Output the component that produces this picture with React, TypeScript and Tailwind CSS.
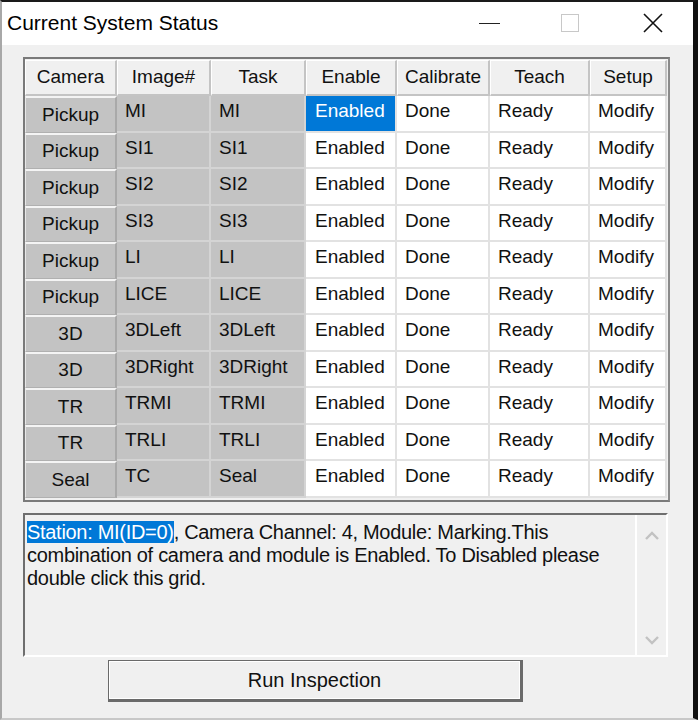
import React from "react";

const rows: [string, string, string][] = [
  ["Pickup", "MI", "MI"],
  ["Pickup", "SI1", "SI1"],
  ["Pickup", "SI2", "SI2"],
  ["Pickup", "SI3", "SI3"],
  ["Pickup", "LI", "LI"],
  ["Pickup", "LICE", "LICE"],
  ["3D", "3DLeft", "3DLeft"],
  ["3D", "3DRight", "3DRight"],
  ["TR", "TRMI", "TRMI"],
  ["TR", "TRLI", "TRLI"],
  ["Seal", "TC", "Seal"],
];

const headers = ["Camera", "Image#", "Task", "Enable", "Calibrate", "Teach", "Setup"];
const widths = ["w-[92px]", "w-[94px]", "w-[95px]", "w-[91px]", "w-[93px]", "w-[100px]", "w-[77px]"];

export default function App() {
  return (
    <div
      className="w-[698px] h-[720px] bg-[#f0f0f0] flex flex-col border-t-2 border-t-[#1a1a1a] border-l-2 border-l-[#a8a8a8] border-r-[5px] border-r-[#111] border-b-2 border-b-[#c8c8c8] overflow-hidden text-[#111]"
      style={{ fontFamily: '"Liberation Sans", Arial, sans-serif' }}
    >
      {/* Title bar */}
      <div className="h-[43px] bg-white flex items-center shrink-0">
        <div className="pl-[5px] pb-[1px] text-[21px] text-black flex-1">Current System Status</div>
        <div className="w-[80px] flex justify-center">
          <div className="w-[21px] h-[1.5px] bg-[#222]" />
        </div>
        <div className="w-[84px] flex justify-center pr-[3px] pb-[2px]">
          <div className="w-[18px] h-[18px] border border-[#c8c8c8]" />
        </div>
        <div className="w-[80px] flex justify-center pb-[2px]">
          <svg width="20" height="20" viewBox="0 0 20 20">
            <path d="M1 1 L19 19 M19 1 L1 19" stroke="#111" strokeWidth="1.6" />
          </svg>
        </div>
      </div>

      {/* Body */}
      <div className="flex flex-col pl-[21px] pt-[12px]">
        {/* Grid */}
        <div className="w-[647px] border-2 border-t-[#7a7a7a] border-l-[#7a7a7a] border-b-[#7a7a7a] border-r-[#8a8a8a] bg-[#f0f0f0] pr-[1px] pb-[2px]">
          <div className="flex h-[37px] pt-[1px]">
            {headers.map((h, i) => (
              <div
                key={h}
                className={`${widths[i]} h-full flex items-center justify-center text-[19px] bg-[#f0f0f0] border-t border-l border-t-white border-l-white border-r-2 border-b-2 border-r-[#c4c4c4] border-b-[#c4c4c4]`}
              >
                {h}
              </div>
            ))}
          </div>
          {rows.map((r, ri) => (
            <div key={ri} className="flex h-[36.5px]">
              <div className="w-[92px] h-full flex items-center justify-center text-[19px] bg-[#c3c3c3] border-t-2 border-l border-t-[#f4f4f4] border-l-[#e8e8e8] border-r-2 border-b border-r-[#a9a9a9] border-b-[#b0b0b0]">
                {r[0]}
              </div>
              <div className="w-[94px] h-full flex items-center pl-[8px] pb-[4px] text-[19px] bg-[#c3c3c3] border-r-2 border-b-2 border-r-[#d4d4d4] border-b-[#d4d4d4]">
                {r[1]}
              </div>
              <div className="w-[95px] h-full flex items-center pl-[8px] pb-[4px] text-[19px] bg-[#c3c3c3] border-r-2 border-b-2 border-r-[#d4d4d4] border-b-[#d4d4d4]">
                {r[2]}
              </div>
              <div
                className={`w-[91px] h-full flex items-center pl-[9px] pb-[4px] text-[19px] border-r-2 border-b-2 border-r-[#e2e2e2] border-b-[#e2e2e2] ${
                  ri === 0 ? "bg-[#0078d7] text-white" : "bg-white"
                }`}
              >
                Enabled
              </div>
              <div className="w-[93px] h-full flex items-center pl-[8px] pb-[4px] text-[19px] bg-white border-r-2 border-b-2 border-r-[#e2e2e2] border-b-[#e2e2e2]">
                Done
              </div>
              <div className="w-[100px] h-full flex items-center pl-[8px] pb-[4px] text-[19px] bg-white border-r-2 border-b-2 border-r-[#e2e2e2] border-b-[#e2e2e2]">
                Ready
              </div>
              <div className="w-[77px] h-full flex items-center pl-[8px] pb-[4px] text-[19px] bg-white border-r-2 border-b-2 border-r-[#e2e2e2] border-b-[#e2e2e2]">
                Modify
              </div>
            </div>
          ))}
        </div>

        {/* Text box */}
        <div className="mt-[11px] w-[645px] h-[144px] flex border-t-2 border-l-2 border-t-[#6e6e6e] border-l-[#6e6e6e] border-b-2 border-r-2 border-b-white border-r-white bg-[#f0f0f0]">
          <div className="flex-1 pl-[2px] pt-[6px] text-[20px] leading-[23px] tracking-[-0.3px]">
            <span className="bg-[#0078d7] text-white">Station: MI(ID=0)</span>, Camera Channel: 4, Module: Marking.This
            <br />
            combination of camera and module is Enabled. To Disabled please
            <br />
            double click this grid.
          </div>
          <div className="w-[31px] h-full border-l-2 border-l-white flex flex-col items-center justify-between pt-[16px] pb-[10px]">
            <svg width="14" height="9" viewBox="0 0 14 9">
              <path d="M1 8 L7 2 L13 8" stroke="#c2c2c2" strokeWidth="2.4" fill="none" />
            </svg>
            <svg width="14" height="9" viewBox="0 0 14 9">
              <path d="M1 1 L7 7 L13 1" stroke="#c2c2c2" strokeWidth="2.4" fill="none" />
            </svg>
          </div>
        </div>

        {/* Button */}
        <div className="mt-[3px] ml-[85px] w-[415px] h-[42px] border border-[#6a6a6a] border-r-[3px] border-b-[3px] bg-[#f0f0f0] flex">
          <div className="flex-1 border border-white flex items-center justify-center text-[20px]">
            Run Inspection
          </div>
        </div>
      </div>
    </div>
  );
}
